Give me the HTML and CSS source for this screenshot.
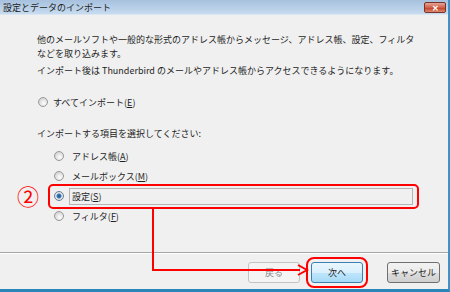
FILE: index.html
```html
<!DOCTYPE html>
<html lang="ja">
<head>
  <meta charset="UTF-8" />
  <title>設定とデータのインポート</title>
  <link rel="stylesheet" href="styles.css">
</head>
<body>
  <div class="window">
    <!-- title bar -->
    <div class="titlebar">
      <span class="title">設定とデータのインポート</span>
      <span class="close-btn">✕</span>
    </div>

    <!-- body -->
    <div class="content">
      <p class="intro">他のメールソフトや一般的な形式のアドレス帳からメッセージ、アドレス帳、設定、フィルタ<br>などを取り込みます。</p>
      <p class="intro second">インポート後は Thunderbird のメールやアドレス帳からアクセスできるようになります。</p>

      <div class="option all"><span class="radio"></span>すべてインポート(<u>E</u>)</div>

      <p class="prompt">インポートする項目を選択してください:</p>

      <div class="sub-options">
        <div class="option"><span class="radio"></span><span class="label">アドレス帳(<u>A</u>)</span></div>
        <div class="option"><span class="radio"></span><span class="label">メールボックス(<u>M</u>)</span></div>
        <div class="option"><span class="radio checked"></span><span class="label focus">設定(<u>S</u>)</span></div>
        <div class="option"><span class="radio"></span><span class="label">フィルタ(<u>F</u>)</span></div>
      </div>
    </div>

    <!-- buttons -->
    <div class="footer">
      <button class="btn" disabled>戻る</button>
      <button class="btn default">次へ</button>
      <button class="btn cancel">キャンセル</button>
    </div>

    <!-- annotations -->
    <span class="step-no">②</span>
    <span class="mark-box"></span>
    <svg class="connector" width="450" height="292" viewBox="0 0 450 292">
      <polyline points="153,208 153,270 300,270" fill="none" stroke="#ff0000" stroke-width="2" />
      <polyline points="298,265 307,270 298,275" fill="none" stroke="#ff0000" stroke-width="2" />
    </svg>
  </div>
</body>
</html>
```

FILE: styles.css
```css
* {
  box-sizing: border-box;
}
body {
  margin: 0;
  background: #f0f0f0;
  font-family: "Noto Sans CJK JP", "Noto Sans", sans-serif;
  font-size: 9px;
  color: #1e1e1e;
}

.window {
  position: relative;
  width: 450px;
  height: 292px;
  display: flex;
  flex-direction: column;
  border-right: 2px solid #3f92c9;
  border-bottom: 3px solid #2a85b8;
  overflow: hidden;
}

.titlebar {
  height: 15px;
  display: flex;
  align-items: center;
  justify-content: space-between;
  padding: 0 2px 0 3px;
  background: linear-gradient(#a7c1de, #bcd3ea 70%, #c8dcef);
  border-bottom: 1px solid #d9e6f3;
}

.title {
  font-size: 9px;
  color: #222;
}

.close-btn {
  width: 22px;
  height: 11px;
  border: 1px solid #7a3226;
  border-radius: 2px;
  background: linear-gradient(#e6a597, #d0604a 50%, #c33f27 55%, #dc8a76);
  color: #fff;
  font-size: 8px;
  font-weight: bold;
  line-height: 9px;
  text-align: center;
}

.content {
  flex: 1;
  padding: 18px 0 0 37px;
}

.intro {
  margin: 0;
  line-height: 14px;
}
.intro.second {
  margin-top: 3px;
}

.option {
  display: flex;
  align-items: center;
  height: 20px;
}
.option.all {
  margin: 14px 0 0 1px;
}

.radio {
  width: 10px;
  height: 10px;
  margin-right: 5px;
  border: 1px solid #999999;
  border-radius: 50%;
  background: radial-gradient(circle at 60% 65%, #ffffff, #dcdcdc 60%, #c4c4c4);
  flex: none;
}
.radio.checked {
  background: radial-gradient(circle, #1b4f86 0, #3b7fbf 2px, #e6e6e6 3px, #d2d2d2);
  border-color: #6a7f95;
}

.prompt {
  margin: 15px 0 0;
  line-height: 14px;
}

.sub-options {
  margin: 5px 0 0 17px;
}
.option .label {
  padding: 1px 2px;
  border: 1px solid transparent;
}
.option .label.focus {
  flex: 1;
  margin-right: 35px;
  border-color: #b4b4b4;
}

.footer {
  display: flex;
  justify-content: flex-end;
  align-items: flex-start;
  height: 37px;
  padding: 9px 8px 0 0;
  border-top: 1px solid #a5a5a5;
  box-shadow: inset 0 1px 0 #ffffff;
}

.btn {
  width: 52px;
  height: 21px;
  margin-left: 11px;
  padding: 0;
  font-family: inherit;
  font-size: 9px;
  color: #1e1e1e;
  border: 1px solid #707070;
  border-radius: 3px;
  background: linear-gradient(#f2f2f2, #ebebeb 50%, #dddddd 51%, #cfcfcf);
}
.btn:disabled {
  border-color: #c0c4c7;
  background: #f4f4f4;
  color: #8a8a8a;
}
.btn.default {
  border-color: #3c7fb1;
  background: linear-gradient(#eaf6fd, #d9f0fc 50%, #bee6fd 51%, #a7d9f5);
  outline: 2px solid #ff0000;
  outline-offset: 3px;
}
.btn.cancel {
  width: 53px;
  margin-left: 24px;
}

/* red annotations drawn over the dialog */
.step-no {
  position: absolute;
  left: 17px;
  top: 183px;
  font-size: 22px;
  line-height: 24px;
  color: #ff0000;
}
.mark-box {
  position: absolute;
  left: 48px;
  top: 184px;
  width: 371px;
  height: 25px;
  border: 2px solid #ff0000;
  border-radius: 5px;
}
.connector {
  position: absolute;
  left: 0;
  top: 0;
}
```
